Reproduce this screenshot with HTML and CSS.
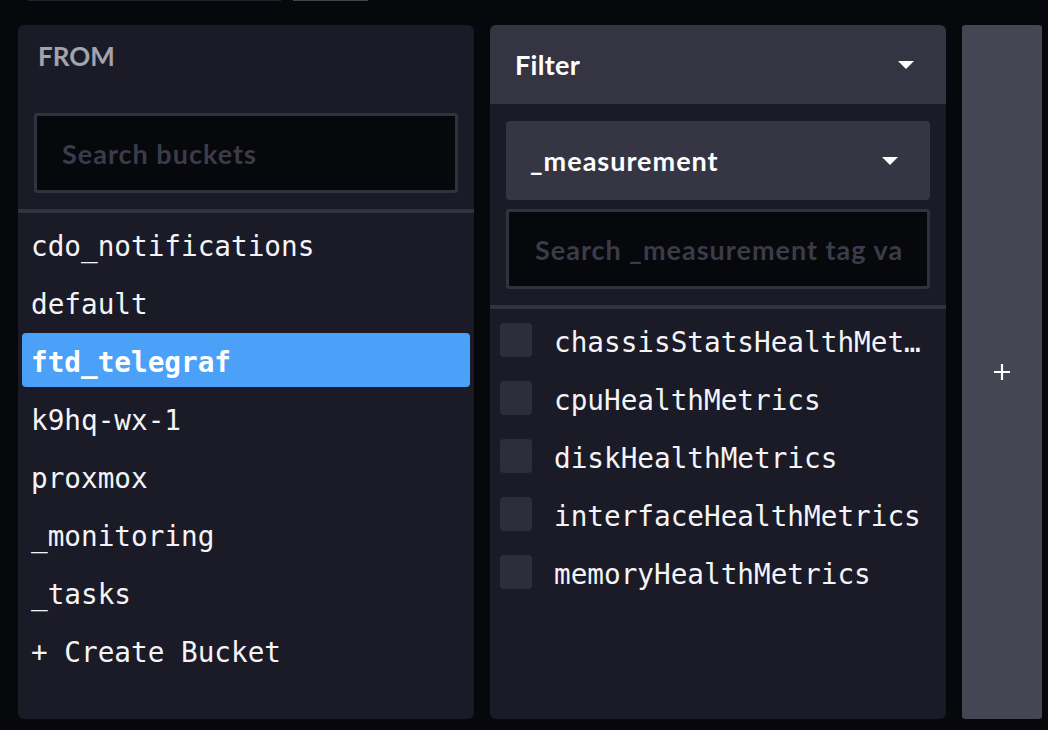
FILE: index.html
```html
<!DOCTYPE html>
<html lang="en">
<head>
<meta charset="utf-8">
<title>Query builder</title>
<link rel="stylesheet" href="styles.css">
</head>
<body>
<div class="top">
  <span class="mark mark-a"></span>
  <span class="mark mark-b"></span>
</div>
<div class="cols">
  <section class="panel">
    <div class="from-label">FROM</div>
    <div class="search-wrap">
      <input class="search" type="text" placeholder="Search buckets">
    </div>
    <div class="divider"></div>
    <ul class="list">
      <li class="item">cdo_notifications</li>
      <li class="item">default</li>
      <li class="item selected">ftd_telegraf</li>
      <li class="item">k9hq-wx-1</li>
      <li class="item">proxmox</li>
      <li class="item">_monitoring</li>
      <li class="item">_tasks</li>
      <li class="item">+ Create Bucket</li>
    </ul>
  </section>

  <section class="panel">
    <div class="panel-head">
      <span class="head-title">Filter</span>
      <svg class="caret" width="16" height="8" viewBox="0 0 16 8"><polygon points="0,0 16,0 8,8" fill="#fff"/></svg>
    </div>
    <div class="filter-body">
      <div class="dropdown">
        <span class="dd-label">_measurement</span>
        <svg class="caret" width="16" height="8" viewBox="0 0 16 8"><polygon points="0,0 16,0 8,8" fill="#fff"/></svg>
      </div>
      <input class="search search-tag" type="text" placeholder="Search _measurement tag values">
    </div>
    <div class="divider"></div>
    <ul class="list">
      <li class="item check-item"><span class="box"></span><span class="check-text">chassisStatsHealthMetrics</span></li>
      <li class="item check-item"><span class="box"></span><span class="check-text">cpuHealthMetrics</span></li>
      <li class="item check-item"><span class="box"></span><span class="check-text">diskHealthMetrics</span></li>
      <li class="item check-item"><span class="box"></span><span class="check-text">interfaceHealthMetrics</span></li>
      <li class="item check-item"><span class="box"></span><span class="check-text">memoryHealthMetrics</span></li>
    </ul>
  </section>

  <section class="add-panel">
    <svg width="16" height="16" viewBox="0 0 16 16"><path d="M8 0V16M0 8H16" stroke="#fff" stroke-width="2.2"/></svg>
  </section>
</div>
</body>
</html>
```

FILE: styles.css
```css
* { box-sizing: border-box; }

html, body {
  margin: 0;
  padding: 0;
  background: #07080c;
}

body {
  width: 1048px;
  height: 730px;
  overflow: hidden;
  font-family: Lato, "Open Sans", sans-serif;
  color: #fff;
}

.top {
  height: 25px;
  display: flex;
  align-items: flex-start;
  gap: 12px;
  padding-left: 28px;
}

.mark {
  display: block;
  height: 1px;
}
.mark-a { width: 253px; background: #22222f; }
.mark-b { width: 75px; background: #44444f; }

.cols {
  display: flex;
  gap: 16px;
  padding-left: 18px;
  height: 694px;
}

.panel {
  width: 456px;
  flex: none;
  background: #1b1b27;
  border-radius: 6px;
  display: flex;
  flex-direction: column;
  overflow: hidden;
}

.from-label {
  padding: 16px 20px 0;
  font-size: 26px;
  line-height: 30px;
  font-weight: 700;
  color: #a3a3ae;
}

.search-wrap {
  padding: 42px 16px 0;
}

.search {
  display: block;
  width: 100%;
  height: 80px;
  margin: 0;
  background: #07080c;
  border: 3px solid #32323e;
  border-radius: 3px;
  padding: 0 16px 0 25px;
  font-family: Lato, "Open Sans", sans-serif;
  font-size: 27px;
  font-weight: 700;
  letter-spacing: 1px;
  color: #fff;
  outline: none;
}
.search::placeholder { color: #3b3b49; }

.divider {
  height: 4px;
  margin-top: 16px;
  background: #33333f;
  flex: none;
}

.list {
  list-style: none;
  margin: 0;
  padding: 4px 4px 0;
  display: flex;
  flex-direction: column;
  gap: 4px;
}

.item {
  height: 54px;
  line-height: 54px;
  padding: 3px 0 0 9px;
  border-radius: 4px;
  font-family: "DejaVu Sans Mono", "Liberation Mono", monospace;
  font-size: 27.7px;
  color: #f4f4f8;
  white-space: nowrap;
}

.item.selected {
  background: #4aa1f7;
  font-weight: 700;
  color: #fff;
}

.panel-head {
  height: 79px;
  flex: none;
  background: #343442;
  display: flex;
  align-items: center;
  justify-content: space-between;
  padding: 0 32px 0 25px;
}

.head-title {
  font-size: 27px;
  font-weight: 700;
  letter-spacing: 0.3px;
}

.caret { display: block; flex: none; }

.filter-body {
  padding: 17px 16px 0;
  display: flex;
  flex-direction: column;
  gap: 9px;
}

.dropdown {
  height: 79px;
  background: #353544;
  border-radius: 4px;
  display: flex;
  align-items: center;
  justify-content: space-between;
  padding: 0 32px 0 24px;
}

.dd-label {
  font-size: 27px;
  font-weight: 700;
  letter-spacing: 1px;
}

.search-tag {
  padding-left: 26px;
  padding-right: 26px;
  text-overflow: clip;
}

.check-item {
  display: flex;
  align-items: center;
  padding: 0 12px 0 6px;
  gap: 22px;
}

.box {
  width: 32px;
  height: 34px;
  flex: none;
  border-radius: 4px;
  background: #2e2e3a;
}

.check-text {
  flex: 1;
  min-width: 0;
  line-height: 54px;
  padding-top: 6px;
  overflow: hidden;
  text-overflow: ellipsis;
  white-space: nowrap;
}

.add-panel {
  width: 80px;
  flex: none;
  background: #454553;
  border-radius: 3px;
  display: flex;
  align-items: center;
  justify-content: center;
}
.add-panel svg { display: block; }
```
